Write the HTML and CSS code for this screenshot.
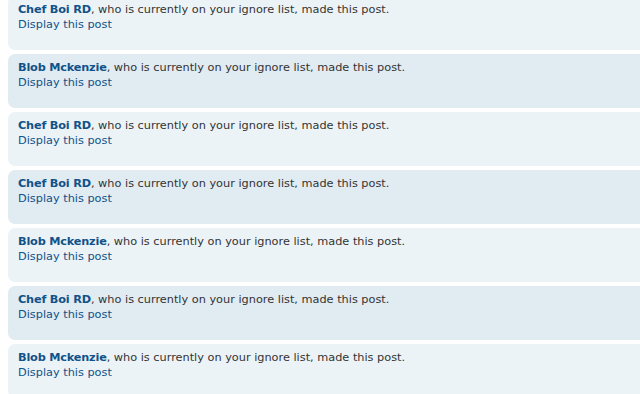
FILE: index.html
```html
<!DOCTYPE html>
<html>
<head>
<meta charset="utf-8">
<link rel="stylesheet" href="styles.css">
</head>
<body>
<div class="topic">
  <div class="post bg2"><div class="ignore"><a class="author" href="#">Chef Boi RD</a>, who is currently on your ignore list, made this post.<br><a class="display" href="#">Display this post</a></div></div>
  <div class="post bg1"><div class="ignore"><a class="author" href="#">Blob Mckenzie</a>, who is currently on your ignore list, made this post.<br><a class="display" href="#">Display this post</a></div></div>
  <div class="post bg2"><div class="ignore"><a class="author" href="#">Chef Boi RD</a>, who is currently on your ignore list, made this post.<br><a class="display" href="#">Display this post</a></div></div>
  <div class="post bg1"><div class="ignore"><a class="author" href="#">Chef Boi RD</a>, who is currently on your ignore list, made this post.<br><a class="display" href="#">Display this post</a></div></div>
  <div class="post bg2"><div class="ignore"><a class="author" href="#">Blob Mckenzie</a>, who is currently on your ignore list, made this post.<br><a class="display" href="#">Display this post</a></div></div>
  <div class="post bg1"><div class="ignore"><a class="author" href="#">Chef Boi RD</a>, who is currently on your ignore list, made this post.<br><a class="display" href="#">Display this post</a></div></div>
  <div class="post bg2"><div class="ignore"><a class="author" href="#">Blob Mckenzie</a>, who is currently on your ignore list, made this post.<br><a class="display" href="#">Display this post</a></div></div>
</div>
</body>
</html>
```
FILE: styles.css
```css
html { overflow: hidden; }
body {
  margin: 0 0 0 8px;
  background: #ffffff;
  font-family: "DejaVu Sans", Verdana, sans-serif;
  font-size: 11.3px;
  color: #333333;
}
.topic {
  margin-top: -4px;
  margin-right: -10px;
}
.post {
  box-sizing: border-box;
  height: 54px;
  margin-bottom: 4px;
  padding: 6px 10px 4px;
  border-radius: 7px;
}
.bg2 { background: #ecf3f7; }
.bg1 { background: #e1ebf2; }
.ignore { line-height: 15px; }
a { color: #105289; text-decoration: none; }
.author { font-weight: bold; letter-spacing: -0.2px; }
```
